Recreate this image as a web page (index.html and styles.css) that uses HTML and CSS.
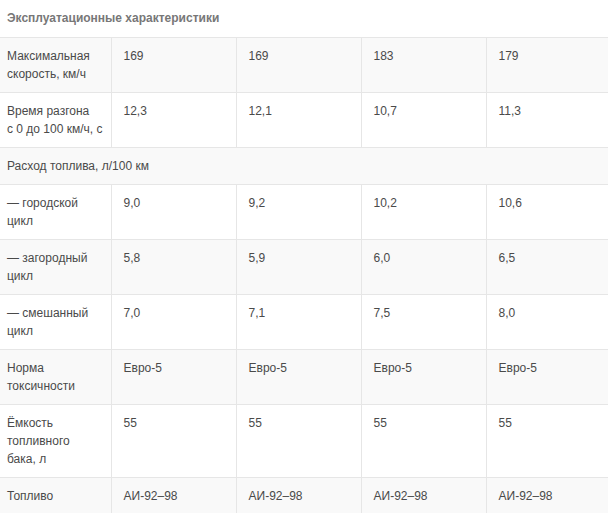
FILE: index.html
```html
<!DOCTYPE html>
<html lang="ru">
<head>
<meta charset="utf-8">
<title>Эксплуатационные характеристики</title>
<link rel="stylesheet" href="styles.css">
</head>
<body>
<div class="specs">
  <div class="specs-title">Эксплуатационные характеристики</div>
  <table class="specs-table">
    <colgroup>
      <col class="c-label"><col class="c-val"><col class="c-val"><col class="c-val"><col class="c-last">
    </colgroup>
    <tbody>
      <tr class="odd"><td>Максимальная<br>скорость, км/ч</td><td>169</td><td>169</td><td>183</td><td>179</td></tr>
      <tr><td>Время разгона<br>с 0 до 100 км/ч, с</td><td>12,3</td><td>12,1</td><td>10,7</td><td>11,3</td></tr>
      <tr class="odd"><td colspan="5">Расход топлива, л/100 км</td></tr>
      <tr><td>— городской<br>цикл</td><td>9,0</td><td>9,2</td><td>10,2</td><td>10,6</td></tr>
      <tr class="odd"><td>— загородный<br>цикл</td><td>5,8</td><td>5,9</td><td>6,0</td><td>6,5</td></tr>
      <tr><td>— смешанный<br>цикл</td><td>7,0</td><td>7,1</td><td>7,5</td><td>8,0</td></tr>
      <tr class="odd"><td>Норма<br>токсичности</td><td>Евро-5</td><td>Евро-5</td><td>Евро-5</td><td>Евро-5</td></tr>
      <tr><td>Ёмкость<br>топливного<br>бака, л</td><td>55</td><td>55</td><td>55</td><td>55</td></tr>
      <tr class="odd"><td>Топливо</td><td>АИ-92–98</td><td>АИ-92–98</td><td>АИ-92–98</td><td>АИ-92–98</td></tr>
    </tbody>
  </table>
</div>
</body>
</html>
```
FILE: styles.css
```css
html, body {
  margin: 0;
  padding: 0;
  background: #fff;
}
body {
  font-family: "Liberation Sans", Arial, sans-serif;
  font-size: 12px;
  line-height: 18px;
  color: #4a4a4a;
}
.specs {
  width: 608px;
}
.specs-title {
  height: 37px;
  padding: 9px 7px 0;
  box-sizing: border-box;
  font-weight: bold;
  color: #777;
}
.specs-table {
  width: 608px;
  border-collapse: collapse;
  table-layout: fixed;
}
.c-label { width: 111px; }
.c-val { width: 125px; }
.c-last { width: 122px; }
.specs-table tr {
  border-top: 1px solid #e6e6e6;
}
.specs-table tr.odd {
  background: #f9f9f9;
}
.specs-table td {
  vertical-align: top;
  padding: 9px 12px 9px 12px;
  border-left: 1px solid #e6e6e6;
}
.specs-table td:first-child {
  padding-left: 7px;
  padding-right: 2px;
  border-left: none;
}
```
